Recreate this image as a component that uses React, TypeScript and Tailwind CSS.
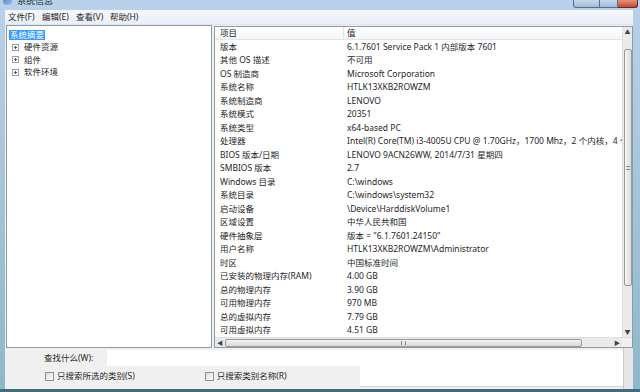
import React from 'react'

const ROWS: [string, string][] = [
    ['版本', '6.1.7601 Service Pack 1 内部版本 7601'],
    ['其他 OS 描述', '不可用'],
    ['OS 制造商', 'Microsoft Corporation'],
    ['系统名称', 'HTLK13XKB2ROWZM'],
    ['系统制造商', 'LENOVO'],
    ['系统模式', '20351'],
    ['系统类型', 'x64-based PC'],
    ['处理器', 'Intel(R) Core(TM) i3-4005U CPU @ 1.70GHz，1700 Mhz，2 个内核，4 个逻辑处理器'],
    ['BIOS 版本/日期', 'LENOVO 9ACN26WW, 2014/7/31 星期四'],
    ['SMBIOS 版本', '2.7'],
    ['Windows 目录', 'C:\\windows'],
    ['系统目录', 'C:\\windows\\system32'],
    ['启动设备', '\\Device\\HarddiskVolume1'],
    ['区域设置', '中华人民共和国'],
    ['硬件抽象层', '版本 = "6.1.7601.24150"'],
    ['用户名称', 'HTLK13XKB2ROWZM\\Administrator'],
    ['时区', '中国标准时间'],
    ['已安装的物理内存(RAM)', '4.00 GB'],
    ['总的物理内存', '3.90 GB'],
    ['可用物理内存', '970 MB'],
    ['总的虚拟内存', '7.79 GB'],
    ['可用虚拟内存', '4.51 GB'],
]

const MENUS = ['文件(F)', '编辑(E)', '查看(V)', '帮助(H)']
const TREE = ['硬件资源', '组件', '软件环境']

function Expander() {
    return (
        <span className="relative w-[7px] h-[7px] border border-[#a0a0a0] bg-white flex-shrink-0">
            <span className="absolute left-[1px] top-[2px] w-[3px] h-px bg-[#555]" />
            <span className="absolute left-[2px] top-[1px] w-px h-[3px] bg-[#555]" />
        </span>
    )
}

function Checkbox({ label }: { label: string }) {
    return (
        <div className="flex items-center gap-[3px]">
            <span className="w-[9px] h-[9px] border border-[#8e8f8f] bg-gradient-to-br from-[#dcdcdc] to-[#fbfbfb]" />
            <span>{label}</span>
        </div>
    )
}

export default function App() {
    return (
        <div
            className="w-[640px] h-[392px] overflow-hidden flex flex-col bg-gradient-to-b from-[#b9d1ea] to-[#8fb7c8] text-[8.5px] leading-none text-[#262626]"
            style={{ fontFamily: '"Noto Sans", "Noto Sans CJK SC", sans-serif' }}
        >
            {/* Title bar (cut off at top) */}
            <div className="h-[10px] flex items-start overflow-hidden">
                <div className="ml-[3px] mt-[-4px] flex items-center gap-[5px]">
                    <span className="w-[9px] h-[9px] rounded-sm bg-gradient-to-br from-[#4a7fc1] to-[#9cc0e8]" />
                    <span className="text-[9px] text-[#233]">系统信息</span>
                </div>
                <div className="ml-auto mr-[2px] flex h-[8px]">
                    <span className="w-[27px] border border-t-0 border-[#56708d] bg-gradient-to-b from-[#c8d8ea] to-[#a3bcd7] rounded-bl-[3px]" />
                    <span className="w-[18px] border border-t-0 border-l-0 border-[#56708d] bg-gradient-to-b from-[#c8d8ea] to-[#a3bcd7]" />
                    <span className="w-[20px] border border-t-0 border-l-0 border-[#6b2a22] bg-gradient-to-b from-[#e0927f] to-[#c8452d] rounded-br-[3px]" />
                </div>
            </div>

            {/* Client area */}
            <div className="flex-1 ml-[5px] mr-[7px] flex flex-col bg-[#f0f0f0] min-h-0">
                {/* Menu bar */}
                <div className="h-[15px] flex items-center pl-[3px] bg-gradient-to-b from-[#f6f8fc] to-[#e9eef6] border-b border-[#dfe5ee]">
                    {MENUS.map(m => (
                        <span key={m} className="w-[34px]">{m}</span>
                    ))}
                </div>

                {/* Panels */}
                <div className="h-[323px] flex gap-[2px] pl-[1px]">
                    {/* Tree */}
                    <div className="w-[206px] border border-[#8e9aa6] bg-white pt-[4px] pl-[2px] flex flex-col">
                        <span className="self-start bg-[#3399ff] text-white px-[1px] h-[10px] flex items-center">系统摘要</span>
                        <div className="flex flex-col mt-[1px]">
                            {TREE.map(t => (
                                <div key={t} className="h-[12.5px] flex items-center gap-[5px] pl-[3px]">
                                    <Expander />
                                    <span>{t}</span>
                                </div>
                            ))}
                        </div>
                    </div>

                    {/* List */}
                    <div className="flex-1 border border-[#8e9aa6] bg-white flex flex-col min-w-0 mt-[1px]">
                        <div className="flex-1 flex min-h-0">
                            <div className="flex-1 flex flex-col min-w-0 overflow-hidden">
                                <div className="h-[14px] flex items-center border-b border-[#e2e4e7] bg-gradient-to-b from-white to-[#f4f5f7]">
                                    <span className="w-[129px] pl-[5px] h-full flex items-center border-r border-[#e2e4e7]">项目</span>
                                    <span className="pl-[3px]">值</span>
                                </div>
                                <div className="flex flex-col">
                                    {ROWS.map(([k, v]) => (
                                        <div key={k} className="h-[13.5px] flex items-center whitespace-nowrap flex-shrink-0">
                                            <span className="w-[129px] pl-[5px] flex-shrink-0">{k}</span>
                                            <span className="pl-[3px]">{v}</span>
                                        </div>
                                    ))}
                                </div>
                            </div>
                            {/* Vertical scrollbar */}
                            <div className="w-[10px] bg-[#eaeaea] flex flex-col items-center border-l border-[#e0e0e0]">
                                <span className="h-[10px] text-[6px] text-[#444] flex items-center">▲</span>
                                <span className="w-[8px] h-[237px] mt-[12px] rounded-[2px] border border-[#9a9a9a] bg-gradient-to-r from-[#f4f4f4] to-[#dcdcdc] flex items-center justify-center">
                                    <span className="w-[4px] h-[4px] border-y border-[#888]" />
                                </span>
                                <span className="mt-auto h-[10px] text-[6px] text-[#444] flex items-center">▼</span>
                            </div>
                        </div>
                        {/* Horizontal scrollbar */}
                        <div className="h-[10px] flex bg-[#eaeaea] border-t border-[#e0e0e0]">
                            <div className="flex-1 flex items-center">
                                <span className="w-[10px] text-[6px] text-[#444] flex justify-center">◀</span>
                                <span className="w-[357px] h-[8px] rounded-[2px] border border-[#9a9a9a] bg-gradient-to-b from-[#f4f4f4] to-[#d8d8d8] flex items-center justify-center">
                                    <span className="w-[5px] h-[4px] border-x border-[#888]" />
                                </span>
                                <span className="ml-auto w-[10px] text-[6px] text-[#444] flex justify-center">▶</span>
                            </div>
                            <div className="w-[10px] bg-[#f0f0f0]" />
                        </div>
                    </div>
                </div>

                {/* Find area */}
                <div className="flex-1 flex">
                    <div className="flex-1 flex flex-col pt-[2px]">
                        <div className="flex items-center h-[16px]">
                            <span className="w-[102px] pl-[39px]">查找什么(W):</span>
                            <span className="flex-1 h-full bg-white" />
                        </div>
                        <div className="flex-1 flex">
                            <div className="w-[355px] flex items-center pl-[40px] gap-[70px] pb-[2px]">
                                <Checkbox label="只搜索所选的类别(S)" />
                                <Checkbox label="只搜索类别名称(R)" />
                            </div>
                            <div className="flex-1 bg-white border-b border-[#d0d0d0] mb-[2px]" />
                        </div>
                    </div>
                    <div className="w-[10px] bg-[#e6e6e6] border-l border-[#c8c8c8]" />
                </div>
            </div>
            <div className="h-[3px] bg-[#3e6c78]" />
        </div>
    )
}
